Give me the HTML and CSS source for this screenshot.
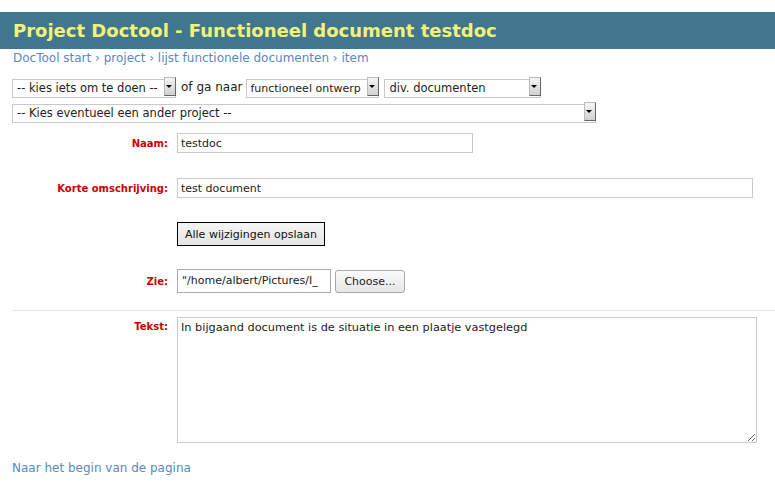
FILE: index.html
```html
<!DOCTYPE html>
<html>
<head>
<meta charset="utf-8">
<link rel="stylesheet" href="styles.css">
</head>
<body>
<h1 class="title">Project Doctool - Functioneel document testdoc</h1>
<div class="crumbs"><a href="#">DocTool start</a> › <a href="#">project</a> › <a href="#">lijst functionele documenten</a> › <a href="#">item</a></div>
<div class="nav-row nav-first">
  <span class="sel sel-a"><select><option>-- kies iets om te doen --</option></select></span>
  <span class="nav-text">of ga naar</span>
  <span class="sel sel-b"><select><option>functioneel ontwerp</option></select></span>
  <span class="sel sel-c"><select><option>div. documenten</option></select></span>
</div>
<div class="nav-row nav-second">
  <span class="sel sel-d"><select><option>-- Kies eventueel een ander project --</option></select></span>
</div>
<form class="form">
  <div class="row r-naam"><label class="lbl">Naam:</label><input class="inp inp-naam" type="text" value="testdoc"></div>
  <div class="row r-korte"><label class="lbl">Korte omschrijving:</label><input class="inp inp-korte" type="text" value="test document"></div>
  <div class="row r-btn"><span class="lbl"></span><button type="button" class="save">Alle wijzigingen opslaan</button></div>
  <div class="row r-zie"><label class="lbl">Zie:</label><span class="file"><span class="file-name">"/home/albert/Pictures/I_</span><button type="button" class="choose">Choose...</button></span></div>
  <hr class="sep">
  <div class="row r-tekst"><label class="lbl">Tekst:</label><textarea class="area">In bijgaand document is de situatie in een plaatje vastgelegd</textarea></div>
</form>
<div class="bottom"><a href="#">Naar het begin van de pagina</a></div>
</body>
</html>
```
FILE: styles.css
```css
html, body { margin: 0; padding: 0; background: #fff; }
body { font-family: "DejaVu Sans", Verdana, sans-serif; color: #222; }
a { color: #5b87c2; text-decoration: none; }

.title {
  margin: 12px 0 0 0;
  height: 37px;
  line-height: 37px;
  padding-left: 13px;
  background: #41768f;
  color: #f2f27a;
  font-size: 18px;
  font-weight: bold;
}
.crumbs {
  padding-left: 13px;
  font-size: 12px;
  line-height: 18px;
  color: #5b87c2;
}
.nav-row { display: flex; align-items: center; gap: 4px; padding-left: 12px; }
.nav-first { margin-top: 10px; }
.nav-second { margin-top: 6px; }
.nav-text { font-size: 12px; color: #222; margin-left: 1px; }
.sel { position: relative; display: inline-block; height: 19px; }
.sel select {
  -webkit-appearance: none; appearance: none;
  box-sizing: border-box; height: 19px; width: 100%;
  border: 1px solid #c9c9c9; background: #fff;
  font-family: "DejaVu Sans", Verdana, sans-serif; font-size: 11.5px; color: #222;
  padding: 0 0 0 4px; margin: 0; border-radius: 0; outline: none;
}
.sel::after {
  content: "";
  position: absolute; right: 0; top: 0;
  width: 10px; height: 17px;
  border: 1px solid #777; border-color: #bbb #666 #666 #bbb;
  background: linear-gradient(#f4f4f4, #d0d0d0);
  pointer-events: none;
}
.sel::before {
  content: "";
  position: absolute; right: 4px; top: 8px; z-index: 1;
  border-left: 3px solid transparent; border-right: 3px solid transparent; border-top: 3px solid #000;
  pointer-events: none;
}
.sel-a { width: 164px; }
.sel-b { width: 133px; }
.sel-b select { font-size: 11px; padding-left: 3px; }
.sel-c { width: 157px; margin-left: 1px; }
.sel-d { width: 584px; }

.form { margin-top: 12px; }
.row { display: flex; align-items: center; }
.lbl { text-align: right; padding-right: 9px; box-sizing: border-box; flex: none;
  color: #cc0000; font-weight: bold; font-size: 10px; width: 177px; }
.r-tekst { align-items: flex-start; }
.r-tekst .lbl { padding-top: 4px; }
.inp {
  box-sizing: border-box; height: 20px; border: 1px solid #c9c9c9; padding: 0 3px;
  font-family: "DejaVu Sans", Verdana, sans-serif; font-size: 11px; color: #222; margin: 0;
}
.inp-naam { width: 296px; }
.inp-korte { width: 576px; }
.r-korte { margin-top: 25px; }
.r-btn { margin-top: 24px; }
.save {
  box-sizing: border-box; height: 24px; width: 148px; margin: 0; padding: 0;
  border: 1px solid #000; background: linear-gradient(#f6f6f6, #e4e4e4);
  font-family: "DejaVu Sans", Verdana, sans-serif; font-size: 11px; color: #111;
}
.r-zie { margin-top: 23px; }
.file { display: flex; align-items: center; gap: 4px; }
.file-name {
  box-sizing: border-box; width: 154px; height: 24px; line-height: 22px; border: 1px solid #aaa;
  padding-left: 4px; font-size: 11px; overflow: hidden; white-space: nowrap; color: #222;
}
.choose {
  box-sizing: border-box; height: 23px; width: 70px; margin: 0; padding: 0;
  border: 1px solid #a8a8a8; border-radius: 3px; background: linear-gradient(#fbfbfb, #e6e6e6);
  font-family: "DejaVu Sans", Verdana, sans-serif; font-size: 11px; color: #222;
}
.sep { border: 0; border-top: 1px solid #e6e6e6; margin: 17px 0 6px 12px; }
.area {
  box-sizing: border-box; width: 580px; height: 126px; margin: 0; border: 1px solid #c9c9c9;
  padding: 3px 3px; font-family: "DejaVu Sans", Verdana, sans-serif; font-size: 11.3px; color: #222; resize: both;
}
.bottom { padding-left: 12px; margin-top: 18px; font-size: 12px; }
```
